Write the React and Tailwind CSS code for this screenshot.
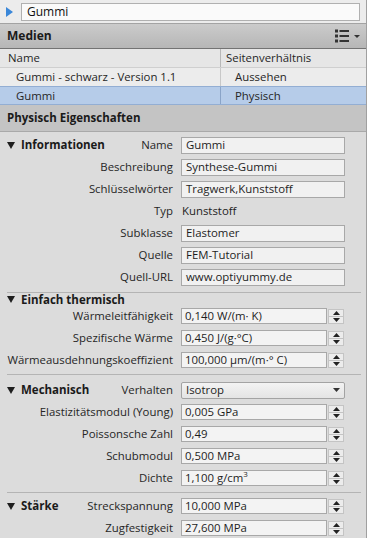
const INFO = [
  { label: 'Name', value: 'Gummi' },
  { label: 'Beschreibung', value: 'Synthese-Gummi' },
  { label: 'Schlüsselwörter', value: 'Tragwerk,Kunststoff' },
  { label: 'Typ', value: 'Kunststoff', plain: true },
  { label: 'Subklasse', value: 'Elastomer' },
  { label: 'Quelle', value: 'FEM-Tutorial' },
  { label: 'Quell-URL', value: 'www.optiyummy.de' },
]

const THERMAL = [
  { label: 'Wärmeleitfähigkeit', value: '0,140 W/(m· K)' },
  { label: 'Spezifische Wärme', value: '0,450 J/(g·°C)' },
  { label: 'Wärmeausdehnungskoeffizient', value: '100,000 µm/(m·° C)' },
]

const MECH = [
  { label: 'Elastizitätsmodul (Young)', value: '0,005 GPa' },
  { label: 'Poissonsche Zahl', value: '0,49' },
  { label: 'Schubmodul', value: '0,500 MPa' },
  { label: 'Dichte', value: <>1,100 g/cm<sup className="text-[8px]">3</sup></> },
]

const STRENGTH = [
  { label: 'Streckspannung', value: '10,000 MPa' },
  { label: 'Zugfestigkeit', value: '27,600 MPa' },
]

function SectionTitle({ children }) {
  return (
    <span className="flex items-center gap-[6px] font-bold text-[11.5px] text-[#1a1a1a]">
      <svg width="8" height="7" viewBox="0 0 8 7"><path d="M0 0h8L4 7z" fill="#1e1e1e" /></svg>
      {children}
    </span>
  )
}

function Row({ label, title, children }) {
  return (
    <div className="flex h-[22px] items-center">
      <div className="w-[166px] flex items-center justify-between whitespace-nowrap">
        {title ? <SectionTitle>{title}</SectionTitle> : <span />}
        <span>{label}</span>
      </div>
      <div className="ml-[8px] flex items-center">{children}</div>
    </div>
  )
}

function TextBox({ value, plain }) {
  if (plain) return <span className="pl-[1px] text-[#1e1e1e]">{value}</span>
  return (
    <div className="w-[164px] h-[17px] border border-[#a8a8a8] bg-[#f1f1f1] px-[4px] flex items-center text-[#1e1e1e] leading-none">
      {value}
    </div>
  )
}

function Spinner({ value }) {
  return (
    <div className="flex items-center">
      <div className="w-[146px] h-[16px] border border-[#a8a8a8] bg-[#f3f3f3] px-[3px] flex items-center text-[#1e1e1e] leading-none whitespace-nowrap">
        {value}
      </div>
      <div className="ml-[1px] w-[16px] h-[15px] flex flex-col border border-[#c4c4c4] bg-[#ececec]">
        <div className="flex-1 flex items-center justify-center border-b border-[#c4c4c4]">
          <svg width="7" height="4" viewBox="0 0 7 4"><path d="M0 4h7L3.5 0z" fill="#222" /></svg>
        </div>
        <div className="flex-1 flex items-center justify-center">
          <svg width="7" height="4" viewBox="0 0 7 4"><path d="M0 0h7L3.5 4z" fill="#222" /></svg>
        </div>
      </div>
    </div>
  )
}

function Divider() {
  return <div className="h-px bg-[#b4b4b4] mr-[5px]" />
}

export default function App() {
  return (
    <div className="w-[367px] h-[538px] overflow-hidden bg-[#dcdcdc] text-[11.4px] text-[#262626] font-['Open_Sans',sans-serif] border-r border-[#a0a0a0]">
      {/* search bar */}
      <div className="h-[24px] bg-[#ececec] flex items-center border-b border-[#a3a3a3]">
        <svg className="ml-[6px]" width="7" height="10" viewBox="0 0 7 10"><path d="M0 0l7 5-7 5z" fill="#3a87d9" /></svg>
        <div className="ml-[8px] w-[339px] h-[18px] border border-[#b0b0b0] bg-[#fafafa] flex items-center px-[5px] text-[#111] text-[12px]">Gummi</div>
      </div>

      {/* Medien */}
      <div className="h-[25px] bg-gradient-to-b from-[#cbcbcb] to-[#b6b6b6] border-b border-[#737373] flex items-center justify-between pl-[7px] pr-[6px]">
        <span className="font-bold text-[12px] text-[#1a1a1a]">Medien</span>
        <div className="flex items-center gap-[5px]">
          <svg width="14" height="14" viewBox="0 0 14 14" fill="#333">
            <rect x="0" y="0.5" width="3" height="3" />
            <rect x="0" y="5.5" width="3" height="3" />
            <rect x="0" y="10.5" width="3" height="3" />
            <rect x="4.5" y="1" width="9.5" height="2" />
            <rect x="4.5" y="6" width="9.5" height="2" />
            <rect x="4.5" y="11" width="9.5" height="2" />
          </svg>
          <svg width="6" height="3" viewBox="0 0 6 3"><path d="M0 0h6L3 3z" fill="#333" /></svg>
        </div>
      </div>

      {/* list */}
      <div className="grid grid-cols-[221px_1fr] h-[19px] bg-[#e6e6e6] border-b border-[#cfcfcf] items-center">
        <div className="pl-[8px] h-full flex items-center border-r border-[#b8b8b8]">Name</div>
        <div className="pl-[5px]">Seitenverhältnis</div>
      </div>
      <div className="grid grid-cols-[221px_1fr] h-[18px] bg-[#ececec] items-center">
        <div className="pl-[16px] h-full flex items-center border-r border-[#c8c8c8]">Gummi - schwarz - Version 1.1</div>
        <div className="pl-[14px]">Aussehen</div>
      </div>
      <div className="grid grid-cols-[221px_1fr] h-[19px] bg-[#b6cce9] border-y border-[#93aed3] items-center">
        <div className="pl-[16px] h-full flex items-center border-r border-[#8aa4c8]">Gummi</div>
        <div className="pl-[14px]">Physisch</div>
      </div>

      {/* Physisch Eigenschaften */}
      <div className="h-[27px] bg-[#c4c4c4] border-b border-[#a9a9a9] flex items-center pl-[7px] font-bold text-[11.5px] text-[#1a1a1a]">
        Physisch Eigenschaften
      </div>

      <div className="pl-[7px] pt-[2px]">
        {INFO.map((f, i) => (
          <Row key={f.label} label={f.label} title={i === 0 ? 'Informationen' : null}>
            <TextBox value={f.value} plain={f.plain} />
          </Row>
        ))}
        <div className="mt-[4px]"><Divider /></div>

        <div className="h-[11px] flex items-center mt-[1px]">
          <SectionTitle>Einfach thermisch</SectionTitle>
        </div>
        {THERMAL.map(f => (
          <Row key={f.label} label={f.label}><Spinner value={f.value} /></Row>
        ))}
        <div className="mt-[3px]"><Divider /></div>

        <div className="mt-[4px]">
          <Row label="Verhalten" title="Mechanisch">
            <div className="w-[164px] h-[17px] border border-[#a3a3a3] rounded-[2px] bg-gradient-to-b from-[#f3f3f3] to-[#e4e4e4] flex items-center justify-between px-[4px] text-[#1e1e1e]">
              <span>Isotrop</span>
              <svg width="7" height="4" viewBox="0 0 7 4"><path d="M0 0h7L3.5 4z" fill="#333" /></svg>
            </div>
          </Row>
          {MECH.map(f => (
            <Row key={f.label} label={f.label}><Spinner value={f.value} /></Row>
          ))}
        </div>
        <div className="mt-[3px]"><Divider /></div>

        <div className="mt-[2px]">
          {STRENGTH.map((f, i) => (
            <Row key={f.label} label={f.label} title={i === 0 ? 'Stärke' : null}>
              <Spinner value={f.value} />
            </Row>
          ))}
        </div>
      </div>
    </div>
  )
}
